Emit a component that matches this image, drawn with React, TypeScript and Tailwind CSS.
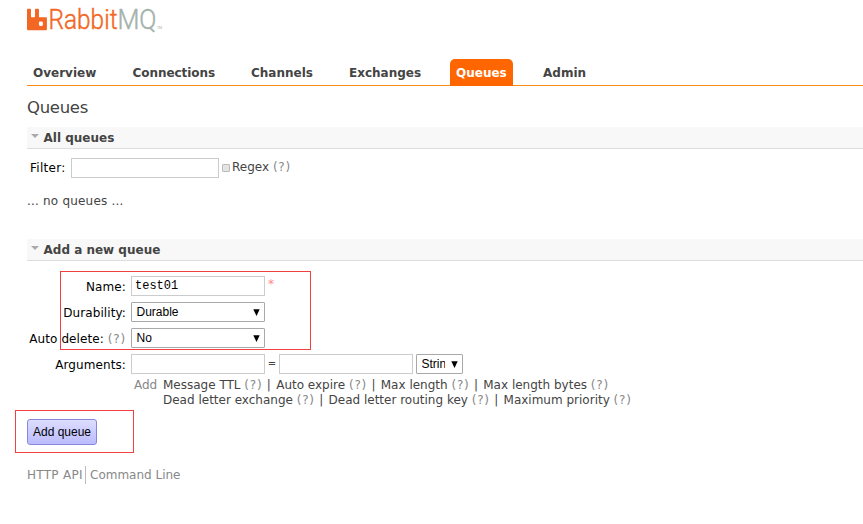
import React from "react";

const tabs = [
  { label: "Overview", cls: "w-[75.5px] mr-[24px]" },
  { label: "Connections", cls: "w-[94.5px] mr-[24px] tracking-[-0.05px]" },
  { label: "Channels", cls: "w-[74px] mr-[24px]" },
  { label: "Exchanges", cls: "w-[83px] mr-[24px]" },
  { label: "Queues", cls: "w-[63px] mr-[24px] bg-[#ff6600] text-white" },
  { label: "Admin", cls: "w-[56px]" },
];

function Help() {
  return <span className="tracking-[0.8px] text-[#888]">(?)</span>;
}

function Sep() {
  return <span className="pl-[0.5px] pr-[1.5px]"> | </span>;
}

function Logo() {
  return (
    <svg className="block" width="150" height="40" viewBox="0 0 150 40">
      <g transform="translate(0 4.8) scale(0.83 0.89)" fill="#f26724">
        <path d="M23.035 9.601h-7.677a.956.956 0 0 1-.962-.962V.962A.956.956 0 0 0 13.433 0H10.56a.956.956 0 0 0-.962.962V8.67a.956.956 0 0 1-.962.962H5.757a.956.956 0 0 1-.962-.962V.962A.956.956 0 0 0 3.833 0H.955A.956.956 0 0 0 0 .962v22.075c0 .533.429.962.955.962h22.08a.956.956 0 0 0 .962-.962v-12.47a.956.956 0 0 0-.962-.966zm-3.86 8.152a1.437 1.437 0 0 1-1.442 1.443h-1.924a1.437 1.437 0 0 1-1.437-1.443v-1.923c0-.795.643-1.437 1.437-1.437h1.924c.797 0 1.442.645 1.442 1.437z" />
      </g>
      <text x="21.5" y="25" fontSize="27" fontFamily="Roboto, sans-serif" fontWeight="300" fill="#f26724" stroke="#f26724" strokeWidth="0.45" textLength="69" lengthAdjust="spacingAndGlyphs">Rabbit</text>
      <text x="90.5" y="25" fontSize="27" fontFamily="Roboto, sans-serif" fontWeight="300" fill="#a4b2ac" stroke="#a4b2ac" strokeWidth="0.45" textLength="39" lengthAdjust="spacingAndGlyphs">MQ</text>
      <text x="130" y="25" fontSize="3.5" fontFamily="Roboto, sans-serif" fill="#a4b2ac">TM</text>
    </svg>
  );
}

function SectionBar({ title }: { title: string }) {
  return (
    <h2 className="flex h-[22px] border-b border-[#ddd] bg-[#f8f8f8] pl-1 text-[12px] font-bold leading-[22px]">
      <svg className="mr-[4px] mt-[7px] block" width="8" height="5" viewBox="0 0 8 5">
        <path d="M0 0h8L4 4z" fill="#aaa" />
      </svg>
      <span className="pl-[0.5px]">{title}</span>
    </h2>
  );
}

function Box({ value, cls }: { value?: string; cls: string }) {
  return (
    <div className={"h-5 shrink-0 border border-[#ccc] bg-white pl-[3px] font-['Liberation_Mono',monospace] text-[12px] leading-[18px] text-black " + cls}>
      {value}
    </div>
  );
}

function Select({ value, cls, textCls = "" }: { value: string; cls: string; textCls?: string }) {
  return (
    <div className={"flex h-5 shrink-0 items-center justify-between rounded-[1px] border border-[#a9a9a9] bg-white pl-[4.5px] pr-[4px] font-['Liberation_Sans',Arial,sans-serif] text-[12px] leading-[18px] text-black " + cls}>
      <span className={"overflow-hidden whitespace-nowrap " + textCls}>{value}</span>
      <svg className="shrink-0" width="7" height="7" viewBox="0 0 7 7">
        <path d="M0.3 0.3h6.4L3.5 7z" fill="#000" />
      </svg>
    </div>
  );
}

function Row({ label, children }: { label: React.ReactNode; children: React.ReactNode }) {
  return (
    <div className="flex h-5">
      <div className="mr-[5px] w-[99px] shrink-0 whitespace-nowrap pt-[2px] text-right leading-[18px] tracking-[0.1px] text-black">{label}</div>
      {children}
    </div>
  );
}

export default function App() {
  return (
    <div className="relative h-[524px] w-[863px] overflow-hidden bg-white pl-[27px] font-['DejaVu_Sans',Verdana,sans-serif] text-[12px] text-[#444]">
      <header className="h-[59px] pt-[4px]">
        <Logo />
      </header>
      <nav className="flex h-[27px] border-b border-[#f98e12]">
        {tabs.map((t) => (
          <a key={t.label} className={"-mb-px block h-[27px] shrink-0 rounded-t-[5px] pl-[6px] text-[12px] font-bold leading-[28px] " + t.cls}>
            {t.label}
          </a>
        ))}
      </nav>
      <h1 className="h-[41px] pt-[11px] text-[16.5px] leading-[21px] tracking-[-0.3px]">Queues</h1>
      <SectionBar title="All queues" />
      <div className="flex h-[45px] pl-[3px] pt-[9px]">
        <span className="w-[41px] leading-[20px] tracking-[0.3px] text-black">Filter:</span>
        <Box cls="w-[148px]" />
        <span className="ml-[3px] mr-[2px] mt-[6px] h-[8px] w-[8px] rounded-[1px] border border-[#bbb] bg-[#e4e4e4]" />
        <span className="leading-[18px]">Regex <Help /></span>
      </div>
      <p className="h-[45px] leading-[14px] tracking-[0.2px]">... no queues ...</p>
      <SectionBar title="Add a new queue" />
      <div className="flex flex-col gap-[6px] pt-[15px]">
        <Row label="Name:">
          <Box cls="w-[134px]" value="test01" />
          <span className="ml-[3px] leading-[16px] text-[#ff8888]">*</span>
        </Row>
        <Row label="Durability:">
          <Select cls="w-[134px]" value="Durable" />
        </Row>
        <Row label={<>Auto delete: <Help /></>}>
          <Select cls="w-[134px]" value="No" />
        </Row>
        <Row label="Arguments:">
          <Box cls="w-[134px]" />
          <span className="w-[14px] text-center text-[10px] leading-[20px]">=</span>
          <Box cls="w-[134px]" />
          <Select cls="ml-[3px] w-[47px]" textCls="w-[23px]" value="Strin" />
        </Row>
      </div>
      <div className="flex h-[45px] whitespace-nowrap pl-[107px] pt-[4px] leading-[15px]">
        <span className="w-[29px] text-[#888]">Add</span>
        <div>
          <p>Message TTL <Help /><Sep />Auto expire <Help /><Sep />Max length <Help /><Sep />Max length bytes <Help /></p>
          <p>Dead letter exchange <Help /><Sep />Dead letter routing key <Help /><Sep />Maximum priority <Help /></p>
        </div>
      </div>
      <button className="block h-[26px] w-[70px] rounded-[3px] border border-[#8888dd] bg-gradient-to-b from-[#ddddff] to-[#bbbbff] text-center font-['Liberation_Sans',Arial,sans-serif] text-[12px] leading-[24px] text-black">
        Add queue
      </button>
      <footer className="mt-[21px] flex h-[18px] leading-[18px] text-[#888]">
        <span className="mr-1 w-[59px] whitespace-nowrap border-r border-[#bbb] tracking-[0.3px]">HTTP API</span>
        <span>Command Line</span>
      </footer>
      <div className="absolute left-[60px] top-[271px] h-[79px] w-[251px] border border-[#f04040]" />
      <div className="absolute left-[15px] top-[410px] h-[43px] w-[119px] border border-[#f04040]" />
    </div>
  );
}
